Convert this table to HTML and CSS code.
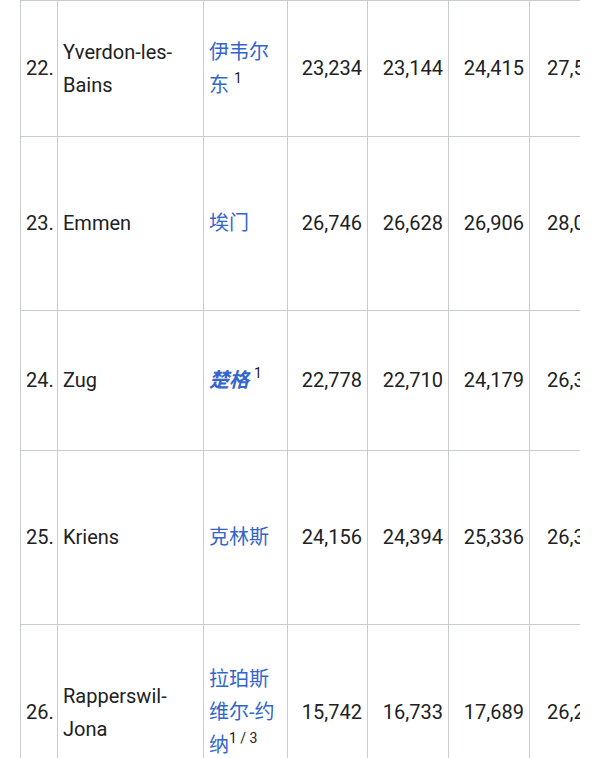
FILE: index.html
```html
<!DOCTYPE html>
<html lang="zh">
<head>
<meta charset="utf-8">
<title>城市人口</title>
<link rel="stylesheet" href="styles.css">
</head>
<body>
<div class="scroller">
  <table class="pop-table">
    <colgroup>
      <col class="c-rank">
      <col class="c-name">
      <col class="c-zh">
      <col class="c-num c-num-first">
      <col class="c-num">
      <col class="c-num">
      <col class="c-num">
    </colgroup>
    <tbody>
      <tr class="r-136">
        <td class="rank">22.</td>
        <td class="name">Yverdon-les-Bains</td>
        <td class="zh"><a href="#">伊韦尔东</a> <sup>1</sup></td>
        <td class="num">23,234</td>
        <td class="num">23,144</td>
        <td class="num">24,415</td>
        <td class="num">27,588</td>
      </tr>
      <tr class="r-174">
        <td class="rank">23.</td>
        <td class="name">Emmen</td>
        <td class="zh"><a href="#">埃门</a></td>
        <td class="num">26,746</td>
        <td class="num">26,628</td>
        <td class="num">26,906</td>
        <td class="num">28,051</td>
      </tr>
      <tr class="r-140">
        <td class="rank">24.</td>
        <td class="name">Zug</td>
        <td class="zh"><a href="#" class="capital">楚格</a> <sup>1</sup></td>
        <td class="num">22,778</td>
        <td class="num">22,710</td>
        <td class="num">24,179</td>
        <td class="num">26,331</td>
      </tr>
      <tr class="r-174">
        <td class="rank">25.</td>
        <td class="name">Kriens</td>
        <td class="zh"><a href="#">克林斯</a></td>
        <td class="num">24,156</td>
        <td class="num">24,394</td>
        <td class="num">25,336</td>
        <td class="num">26,395</td>
      </tr>
      <tr class="r-176">
        <td class="rank">26.</td>
        <td class="name">Rapperswil-Jona</td>
        <td class="zh"><a href="#">拉珀斯维尔-约纳</a><sup>1 / 3</sup></td>
        <td class="num">15,742</td>
        <td class="num">16,733</td>
        <td class="num">17,689</td>
        <td class="num">26,206</td>
      </tr>
    </tbody>
  </table>
</div>
</body>
</html>
```
FILE: styles.css
```css
html, body {
  margin: 0;
  padding: 0;
  background: #ffffff;
}

body {
  font-family: Roboto, "Noto Sans CJK SC", sans-serif;
  font-size: 20px;
  color: #202122;
}

.scroller {
  margin-left: 20px;
  width: 560px;
  overflow: hidden;
}

.pop-table {
  border-collapse: collapse;
  table-layout: fixed;
  width: 590px;
  line-height: 33px;
}

.c-rank { width: 37px; }
.c-name { width: 146px; }
.c-zh { width: 84px; }
.c-num { width: 81px; }
.c-num-first { width: 80px; }

.pop-table td {
  border: 1px solid #c8ccd1;
  padding: 0 5px;
  vertical-align: middle;
}

.r-136 { height: 136px; }
.r-174 { height: 174px; }
.r-140 { height: 140px; }
.r-176 { height: 176px; }

.rank {
  text-align: left;
  padding-left: 6px;
}

.num {
  text-align: right;
  white-space: nowrap;
}

.pop-table td.num:last-child {
  text-align: left;
  padding-left: 17px;
}

.zh a {
  color: #3366cc;
  text-decoration: none;
}

.zh a.capital {
  font-weight: bold;
  font-style: italic;
}

sup {
  font-size: 14px;
  line-height: 0;
  vertical-align: 9px;
}
```
